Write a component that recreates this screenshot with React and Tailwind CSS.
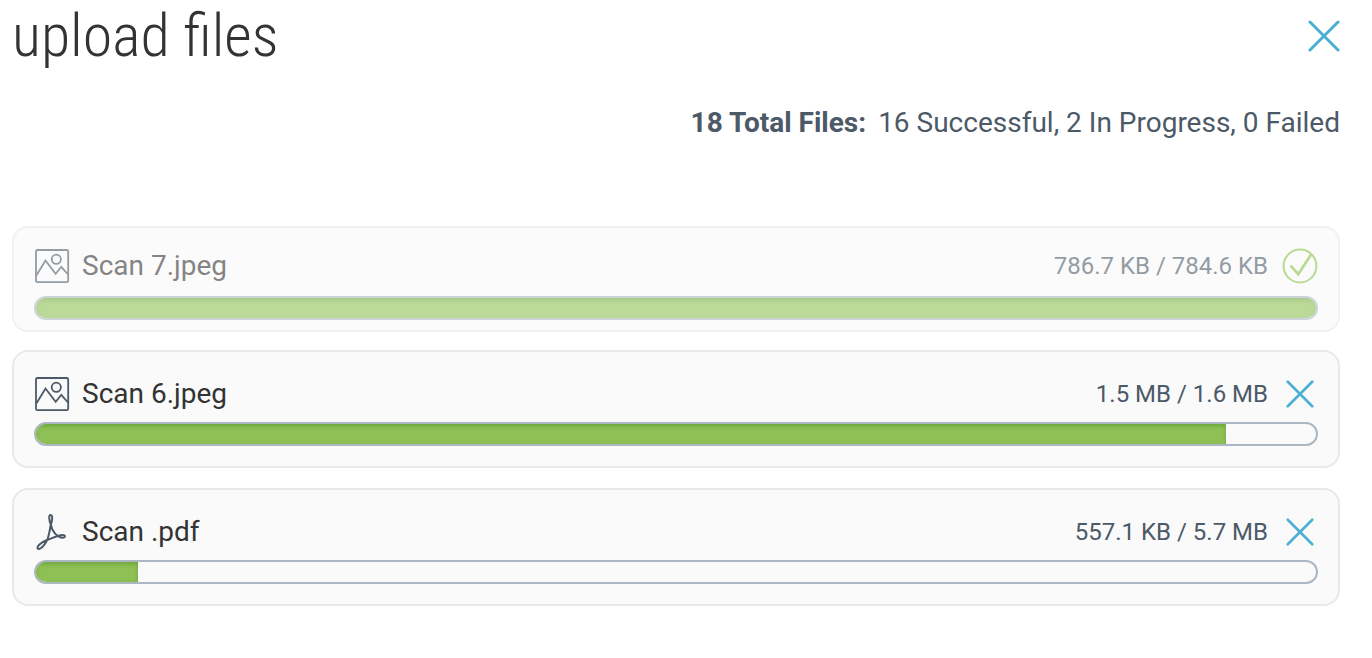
import React from "react";

const uploads = [
  { name: "Scan 7.jpeg", type: "image", size: "786.7 KB / 784.6 KB", percent: 100, done: true },
  { name: "Scan 6.jpeg", type: "image", size: "1.5 MB / 1.6 MB", percent: 93, done: false },
  { name: "Scan .pdf", type: "pdf", size: "557.1 KB / 5.7 MB", percent: 8, done: false },
];

function CloseIcon({ className }) {
  return (
    <svg viewBox="0 0 32 32" className={className} fill="none" stroke="currentColor" strokeLinecap="round" aria-hidden="true">
      <path d="M2 2 30 30M30 2 2 30" />
    </svg>
  );
}

function ImageIcon() {
  return (
    <svg viewBox="0 0 36 36" className="size-9" fill="none" stroke="currentColor" strokeWidth="1.8" aria-hidden="true">
      <rect x="2" y="2" width="32.2" height="32.2" rx="1.5" />
      <circle cx="22.3" cy="11.3" r="4.6" />
      <path d="M2.5 27.3 11.5 12.5 21.7 25.7 27.3 18.8 34 26.5" />
    </svg>
  );
}

function PdfIcon() {
  return (
    <svg viewBox="0 0 36 36" className="size-9" fill="none" stroke="currentColor" strokeWidth="2" strokeLinejoin="round" aria-hidden="true">
      <path d="M16.8 10.5C15.2 6.6 14.4 1.2 16.5 1 19 .9 18.4 6.4 16.7 10.8 15.8 16.5 14.8 21.5 13.3 25.8 10.8 31.2 6.2 36 4.1 34.8 2 33 6 28.7 13 26 18.8 23.8 24.5 21.3 28.6 21 31.6 20.8 31.6 23.6 28.8 23.7 23.5 23.8 18 17.8 16.8 10.5Z" />
    </svg>
  );
}

function CheckIcon() {
  return (
    <svg viewBox="0 0 36 36" className="size-9 text-[#8bc34a]" fill="none" stroke="currentColor" strokeLinecap="round" aria-hidden="true">
      <circle cx="18" cy="18" r="16.4" strokeWidth="2" />
      <path d="M9.3 18.4 16.2 26.2 29 6.8" strokeWidth="2.8" />
    </svg>
  );
}

function UploadCard({ file }) {
  return (
    <li
      className={
        file.done
          ? "mb-[18px] rounded-2xl border-2 border-[#e9e9e9] bg-[#fafafa] px-5 pt-4 pb-2.5 opacity-60"
          : "mb-5 rounded-2xl border-2 border-[#e9e9e9] bg-[#fafafa] p-5"
      }
    >
      <div className={file.done ? "mb-2 flex h-11 items-center" : "mb-1.5 flex h-11 items-center"}>
        <span className="shrink-0 text-[#4c5967]">
          {file.type === "pdf" ? <PdfIcon /> : <ImageIcon />}
        </span>
        <span className="ml-3 grow truncate text-[28px] leading-9 text-[#333333]">{file.name}</span>
        <span className="mr-3.5 shrink-0 text-2xl leading-8 text-[#4c5967]">{file.size}</span>
        {file.done ? (
          <CheckIcon />
        ) : (
          <button type="button" aria-label={`Cancel ${file.name}`} className="flex size-9 items-center justify-center text-[#4bafd1]">
            <CloseIcon className="size-7 stroke-3" />
          </button>
        )}
      </div>
      <div
        role="progressbar"
        aria-label={file.name}
        aria-valuenow={file.percent}
        aria-valuemin={0}
        aria-valuemax={100}
        className="h-6 overflow-hidden rounded-full border-2 border-[#abb7c2]"
      >
        <div
          className="h-full bg-[#8fc055] shadow-[inset_0_2px_4px_#68a53a]"
          style={{ width: `${file.percent}%` }}
        />
      </div>
    </li>
  );
}

export default function App() {
  return (
    <main className="bg-white pr-8 pl-3 font-['Roboto',sans-serif]">
      <header className="flex h-18 items-center justify-between">
        <h1 className="font-['Roboto_Condensed','Roboto',sans-serif] text-[60px] leading-18 font-light text-[#333333]">upload files</h1>
        <button type="button" aria-label="Close" className="text-[#4bafd1]">
          <CloseIcon className="size-8 stroke-3" />
        </button>
      </header>
      <p className="mt-8 text-right text-[28px] leading-[38px] text-[#4c5967]">
        <strong className="mr-3 font-bold">18 Total Files:</strong>
        16 Successful, 2 In Progress, 0 Failed
      </p>
      <ul className="mt-21">
        {uploads.map((file) => (
          <UploadCard key={file.name} file={file} />
        ))}
      </ul>
    </main>
  );
}
